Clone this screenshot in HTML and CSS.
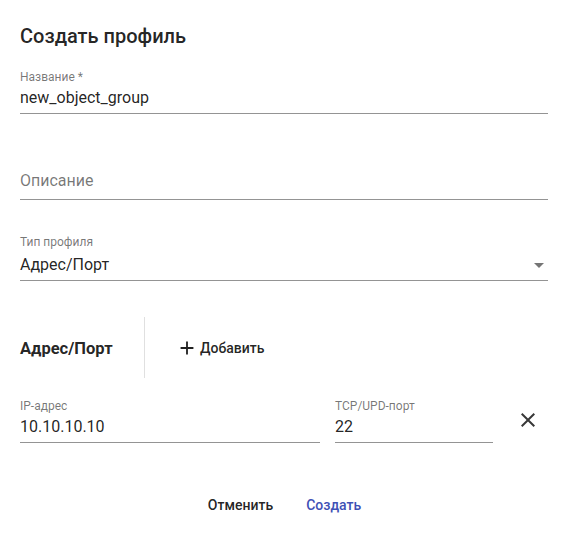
FILE: index.html
```html
<!DOCTYPE html>
<html lang="ru">
<head>
<meta charset="utf-8">
<title>Создать профиль</title>
<link rel="stylesheet" href="styles.css">
</head>
<body>
<div class="dialog">
  <h2 class="title">Создать профиль</h2>

  <div class="field f1">
    <div class="label">Название *</div>
    <div class="input">new_object_group</div>
  </div>

  <div class="field f2">
    <div class="label"></div>
    <div class="input"></div>
    <span class="placeholder">Описание</span>
  </div>

  <div class="field f3 select">
    <div class="label">Тип профиля</div>
    <div class="input">Адрес/Порт
      <svg class="arrow" width="10" height="5" viewBox="0 0 10 5"><path d="M0 0l5 5 5-5z"/></svg>
    </div>
  </div>

  <div class="section">
    <div class="section-title">Адрес/Порт</div>
    <div class="vdivider"></div>
    <button class="add-btn" type="button">
      <svg class="add-icon" width="22" height="22" viewBox="0 0 24 24"><path d="M19 13h-6v6h-2v-6H5v-2h6V5h2v6h6v2z"/></svg>
      <span>Добавить</span>
    </button>
  </div>

  <div class="pair">
    <div class="field ip">
      <div class="label">IP-адрес</div>
      <div class="input">10.10.10.10</div>
    </div>
    <div class="field port">
      <div class="label">TCP/UPD-порт</div>
      <div class="input">22</div>
    </div>
    <svg class="close" width="24" height="24" viewBox="0 0 24 24"><path d="M19 6.41L17.59 5 12 10.59 6.41 5 5 6.41 10.59 12 5 17.59 6.41 19 12 13.41 17.59 19 19 17.59 13.41 12z"/></svg>
  </div>

  <div class="actions">
    <button class="btn cancel" type="button">Отменить</button>
    <button class="btn primary" type="button">Создать</button>
  </div>
</div>
</body>
</html>
```

FILE: styles.css
```css
* { box-sizing: border-box; }
html, body {
  margin: 0;
  padding: 0;
  background: #fff;
}
body {
  font-family: Roboto, "Noto Sans", "Liberation Sans", sans-serif;
  color: rgba(0, 0, 0, 0.87);
}
.dialog {
  width: 569px;
  padding: 20px 21px 0 20px;
}
.title {
  margin: 0;
  font-size: 20px;
  font-weight: 500;
  line-height: 32px;
  height: 32px;
}
.field {
  position: relative;
}
.label {
  font-size: 12px;
  line-height: 14px;
  height: 14px;
  margin-bottom: 4px;
  color: rgba(0, 0, 0, 0.54);
}
.input {
  position: relative;
  font-size: 16px;
  line-height: 19px;
  height: 26px;
  padding-bottom: 6px;
  border-bottom: 1px solid rgba(0, 0, 0, 0.42);
  white-space: nowrap;
}
.f1 { margin-top: 18px; }
.f2 { margin-top: 42px; }
.f3 { margin-top: 35px; }
.f3 .label { margin-bottom: 6px; }
.placeholder {
  position: absolute;
  left: 0;
  top: 15px;
  font-size: 16px;
  line-height: 19px;
  color: rgba(0, 0, 0, 0.54);
}
.arrow {
  position: absolute;
  right: 4px;
  top: 8px;
  fill: rgba(0, 0, 0, 0.54);
}
.section {
  margin-top: 36px;
  height: 61px;
  display: flex;
  align-items: center;
}
.section-title {
  width: 124px;
  font-size: 16.5px;
  font-weight: 700;
  line-height: 19px;
  padding-top: 1px;
}
.vdivider {
  width: 1px;
  align-self: stretch;
  background: rgba(0, 0, 0, 0.12);
}
.add-btn {
  margin-left: 31px;
  display: flex;
  align-items: center;
  gap: 2px;
  border: 0;
  background: none;
  padding: 0;
  font-family: inherit;
  font-size: 14px;
  font-weight: 500;
  line-height: 24px;
  color: rgba(0, 0, 0, 0.87);
  cursor: pointer;
}
.add-icon { fill: rgba(0, 0, 0, 0.87); display: block; }
.pair {
  margin-top: 21px;
  display: flex;
  align-items: flex-start;
}
.ip { width: 300px; }
.port { width: 158px; margin-left: 15px; }
.close {
  margin-left: 23px;
  margin-top: 9px;
  fill: rgba(0, 0, 0, 0.78);
  flex: none;
}
.actions {
  margin-top: 50px;
  display: flex;
  justify-content: center;
  gap: 17px;
  padding-left: 1px;
}
.btn {
  border: 0;
  background: none;
  padding: 0 8px;
  min-width: 64px;
  font-family: inherit;
  font-size: 14px;
  font-weight: 500;
  line-height: 24px;
  cursor: pointer;
}
.cancel { color: rgba(0, 0, 0, 0.87); }
.primary { color: #3f51b5; }
```
